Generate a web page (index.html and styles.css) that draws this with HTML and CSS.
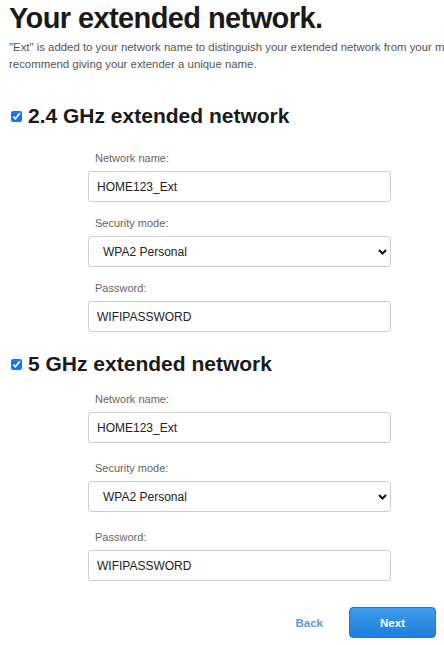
FILE: index.html
```html
<!DOCTYPE html>
<html lang="en">
<head>
    <meta charset="UTF-8">
    <meta name="viewport" content="width=device-width, initial-scale=1.0">
    <title>Your extended network</title>
    <link rel="stylesheet" href="styles.css">
</head>
<body>
    <div class="page">
        <h1>Your extended network.</h1>
        <p class="intro">"Ext" is added to your network name to distinguish your extended network from your main network. We<br>recommend giving your extender a unique name.</p>

        <!-- 2.4 GHz -->
        <section class="band band-first">
            <label class="band-title">
                <input type="checkbox" checked>
                <span>2.4 GHz extended network</span>
            </label>
            <div class="fields">
                <div class="field">
                    <div class="field-label">Network name:</div>
                    <input class="box" type="text" value="HOME123_Ext">
                </div>
                <div class="field">
                    <div class="field-label">Security mode:</div>
                    <div class="select-wrap">
                        <select class="box">
                            <option>WPA2 Personal</option>
                        </select>
                        <svg class="chevron" width="9" height="6" viewBox="0 0 9 6"><path d="M1 1l3.5 3.5L8 1" fill="none" stroke="#111" stroke-width="2"/></svg>
                    </div>
                </div>
                <div class="field">
                    <div class="field-label">Password:</div>
                    <input class="box" type="text" value="WIFIPASSWORD">
                </div>
            </div>
        </section>

        <!-- 5 GHz -->
        <section class="band band-second">
            <label class="band-title">
                <input type="checkbox" checked>
                <span>5 GHz extended network</span>
            </label>
            <div class="fields">
                <div class="field">
                    <div class="field-label">Network name:</div>
                    <input class="box" type="text" value="HOME123_Ext">
                </div>
                <div class="field">
                    <div class="field-label">Security mode:</div>
                    <div class="select-wrap">
                        <select class="box">
                            <option>WPA2 Personal</option>
                        </select>
                        <svg class="chevron" width="9" height="6" viewBox="0 0 9 6"><path d="M1 1l3.5 3.5L8 1" fill="none" stroke="#111" stroke-width="2"/></svg>
                    </div>
                </div>
                <div class="field">
                    <div class="field-label">Password:</div>
                    <input class="box" type="text" value="WIFIPASSWORD">
                </div>
            </div>
        </section>

        <div class="actions">
            <button class="btn-back">Back</button>
            <button class="btn-next">Next</button>
        </div>
    </div>
</body>
</html>
```

FILE: styles.css
```css
html, body {
    margin: 0;
    padding: 0;
    background: #fff;
    overflow: hidden;
}
body {
    font-family: 'Liberation Sans', Arial, sans-serif;
    color: #222;
}
.page {
    width: 444px;
    padding: 0 0 0 9px;
    box-sizing: border-box;
}
h1 {
    margin: 0;
    padding-top: 1px;
    font-size: 29px;
    letter-spacing: -0.6px;
    line-height: 34px;
    font-weight: bold;
    color: #1a1a1a;
}
.intro {
    margin: 4px 0 0;
    font-size: 11.4px;
    line-height: 17px;
    color: #555;
    white-space: nowrap;
    overflow: hidden;
}
.band-first {
    margin-top: 31px;
}
.band-second {
    margin-top: 20px;
}
.band-title {
    display: flex;
    align-items: center;
    gap: 6px;
    font-size: 21px;
    font-weight: bold;
    line-height: 24px;
    color: #1a1a1a;
}
.band-title input {
    margin: 0 0 0 2px;
    width: 11px;
    height: 11px;
    accent-color: #1a73e8;
}
.fields {
    margin: 23px 0 0 79px;
    width: 303px;
}
.band-second .fields {
    margin-top: 16px;
}
.field {
    margin-bottom: 14px;
}
.band-second .field {
    margin-bottom: 18px;
}
.field-label {
    padding-left: 7px;
    font-size: 11px;
    line-height: 14px;
    color: #666;
    margin-bottom: 6px;
}
.box {
    display: block;
    width: 100%;
    height: 31px;
    box-sizing: border-box;
    margin: 0;
    padding: 0 8px;
    border: 1px solid #cfcfcf;
    border-radius: 3px;
    background: #fff;
    font-family: 'Liberation Sans', Arial, sans-serif;
    font-size: 12px;
    color: #222;
    outline: none;
}
select.box {
    -webkit-appearance: none;
    appearance: none;
    padding-left: 14px;
}
.select-wrap {
    position: relative;
}
.chevron {
    position: absolute;
    right: 4px;
    top: 13px;
}
.actions {
    display: flex;
    justify-content: flex-end;
    align-items: center;
    gap: 26px;
    margin-top: 26px;
    padding-right: 8px;
}
.btn-back {
    border: none;
    background: none;
    padding: 0;
    font-family: 'Liberation Sans', Arial, sans-serif;
    font-size: 11.5px;
    font-weight: bold;
    color: #5b9bd5;
}
.btn-next {
    width: 87px;
    height: 31px;
    border: 1px solid #1c78d2;
    border-radius: 4px;
    background: linear-gradient(#3b9cec, #1f7ed8);
    color: #fff;
    font-family: 'Liberation Sans', Arial, sans-serif;
    font-size: 11.5px;
    font-weight: bold;
}
```
